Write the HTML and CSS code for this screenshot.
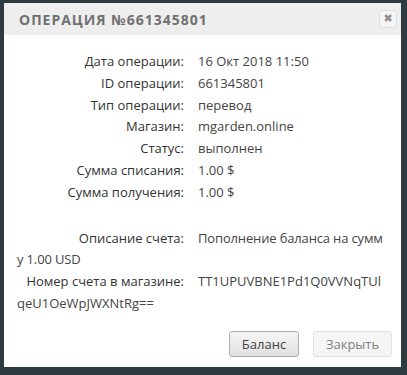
FILE: index.html
```html
<!DOCTYPE html>
<html lang="ru">
<head>
<meta charset="utf-8">
<link rel="stylesheet" href="styles.css">
</head>
<body>
<div class="modal">
  <div class="modal-head">
    <span class="title">Операция №661345801</span>
    <button class="close" type="button">&#x2716;</button>
  </div>
  <div class="modal-body">
    <div class="row"><span class="lbl">Дата операции:</span><span class="val">16 Окт 2018 11:50</span></div>
    <div class="row"><span class="lbl">ID операции:</span><span class="val">661345801</span></div>
    <div class="row"><span class="lbl">Тип операции:</span><span class="val">перевод</span></div>
    <div class="row"><span class="lbl">Магазин:</span><span class="val">mgarden.online</span></div>
    <div class="row"><span class="lbl">Статус:</span><span class="val">выполнен</span></div>
    <div class="row"><span class="lbl">Сумма списания:</span><span class="val">1.00 $</span></div>
    <div class="row"><span class="lbl">Сумма получения:</span><span class="val">1.00 $</span></div>
    <div class="row spaced"><span class="lbl">Описание счета:</span><span class="val tight">Пополнение баланса на сумму 1.00 USD</span></div>
    <div class="row"><span class="lbl">Номер счета в магазине:</span><span class="val">TT1UPUVBNE1Pd1Q0VVNqTUlqeU1OeWpJWXNtRg==</span></div>
  </div>
  <div class="modal-foot">
    <button class="btn btn-main" type="button">Баланс</button>
    <button class="btn btn-light" type="button">Закрыть</button>
  </div>
</div>
</body>
</html>
```
FILE: styles.css
```css
html, body {
  margin: 0;
  padding: 0;
}
body {
  background: #2e3b40;
  width: 407px;
  height: 375px;
  overflow: hidden;
  font-family: "Open Sans", "DejaVu Sans", sans-serif;
}
.modal {
  margin: 3px 6px 0 4px;
  width: 397px;
  height: 364px;
  background: #fff;
  display: flex;
  flex-direction: column;
}
.modal-head {
  height: 32px;
  background: #eeeeee;
  display: flex;
  align-items: center;
  justify-content: space-between;
  padding: 0 4px 0 15px;
}
.title {
  text-transform: uppercase;
  font-weight: 700;
  font-size: 14px;
  letter-spacing: 1px;
  color: #707070;
}
.close {
  width: 18px;
  height: 18px;
  border: 1px solid #e0e0e0;
  border-radius: 3px;
  background: #f4f4f4;
  color: #8c8c8c;
  font-size: 11px;
  line-height: 16px;
  padding: 0;
  text-align: center;
  font-family: "DejaVu Sans", sans-serif;
}
.modal-body {
  padding: 16px 16px 0 13px;
  font-size: 13px;
  line-height: 21.8px;
  color: #444;
  flex: 1;
}
.row {
  word-break: break-all;
}
.lbl {
  display: inline-block;
  width: 167px;
  text-align: right;
  color: #333;
  margin-right: 14px;
  word-break: normal;
}
.tight {
  letter-spacing: -0.15px;
}
.spaced {
  margin-top: 24px;
}
.modal-foot {
  display: flex;
  justify-content: flex-end;
  gap: 14px;
  padding: 0 9px 10px 0;
}
.btn {
  height: 26px;
  font-family: inherit;
  font-size: 13px;
  color: #444;
  border-radius: 3px;
  padding: 0;
}
.btn-main {
  width: 70px;
  background: linear-gradient(#f6f6f6, #e0e0e0);
  border: 1px solid #adadad;
}
.btn-light {
  width: 79px;
  background: #f5f5f5;
  border: 1px solid #e2e2e2;
  color: #808080;
}
```
